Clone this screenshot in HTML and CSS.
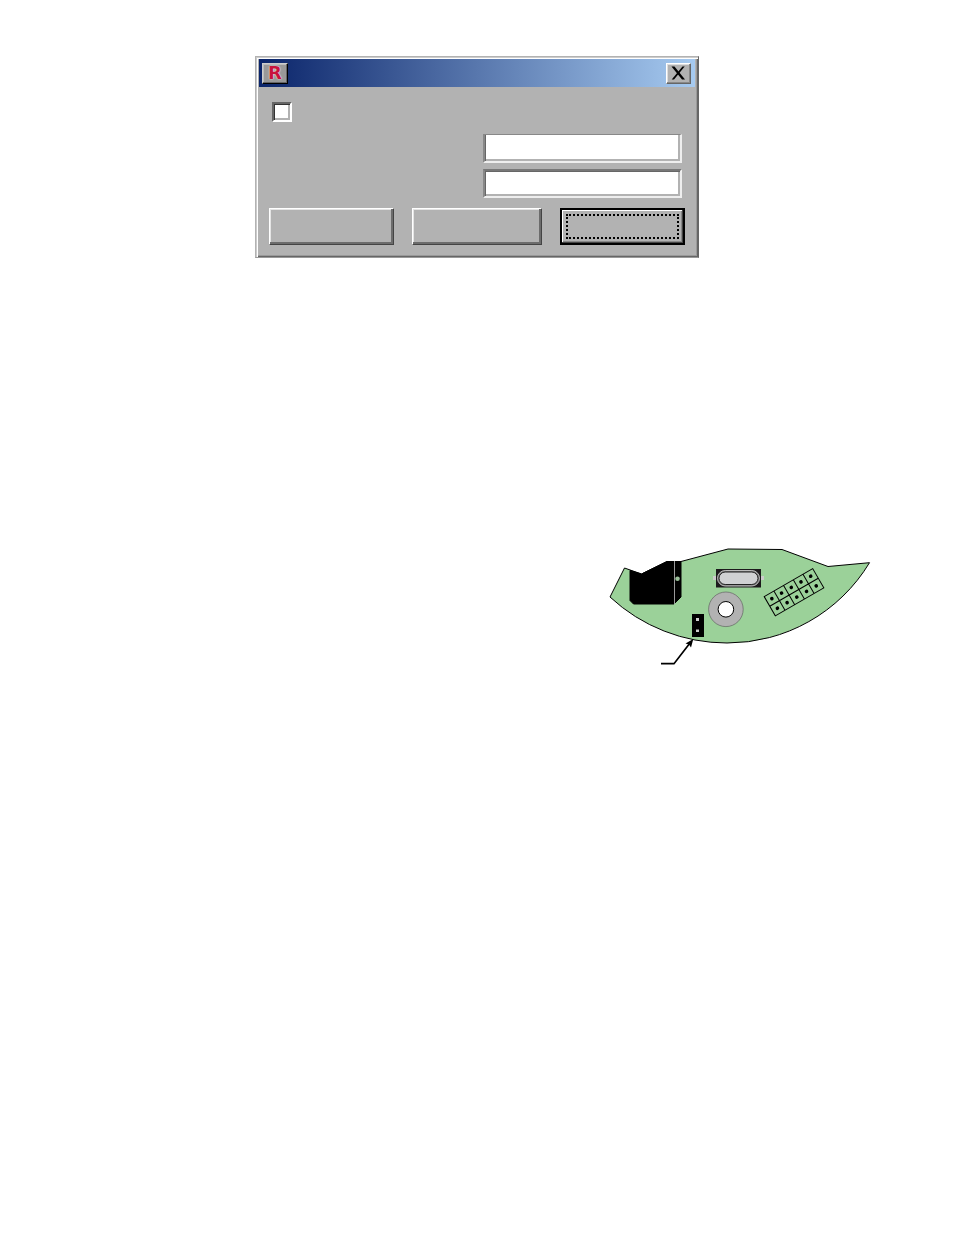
FILE: index.html
```html
<!DOCTYPE html>
<html lang="en">
<head>
    <meta charset="UTF-8">
    <meta name="viewport" content="width=device-width, initial-scale=1.0">
    <title>Settings</title>
    <link rel="stylesheet" href="styles.css">
</head>
<body>
    <form class="window">
        <div class="title-bar">
            <span class="title-icon">R</span>
            <button type="button" class="close-button" aria-label="Close">
                <svg width="15" height="14" viewBox="0 0 15 14">
                    <path d="M.5 .5H3.500L14 13.500H11Z"/>
                    <path d="M11.500 .5H13.700L3 13.500H.7Z"/>
                </svg>
            </button>
        </div>
        <div class="window-body">
            <input type="checkbox" class="check" aria-label="Enable">
            <div class="fields">
                <input type="text" class="field field-light" aria-label="First value">
                <input type="text" class="field" aria-label="Second value">
            </div>
            <div class="buttons">
                <button type="button" class="push-button" aria-label="OK"></button>
                <button type="button" class="push-button push-button-wide" aria-label="Cancel"></button>
                <button type="button" class="push-button push-button-default" aria-label="Apply"><span class="focus-frame"></span></button>
            </div>
        </div>
    </form>

    <div class="board">
        <svg width="280" height="130" viewBox="600 540 280 130" role="img" aria-label="Circuit board with jumper">
            <!-- board -->
            <path d="M610 597L624.500 568L641.500 574L667 561.500H681L728 549L782 549.500L828 566.500L869.500 562.700A166 166 0 0 1 727 643A172 172 0 0 1 610 597Z" fill="#9bd199" stroke="#000"/>
            <!-- connector -->
            <path d="M630 570.500L641.500 574L667 561.500H681V597L674 604H633.500L630 600.500Z" fill="#000" stroke="#000"/>
            <path d="M674.500 561V604" stroke="#999"/>
            <circle cx="677.500" cy="578.700" r="2.300" fill="#9bc09a"/>
            <!-- crystal -->
            <path d="M713 576H764V580H713Z" fill="#ccc"/>
            <path d="M716 569H761V587.500H716Z" fill="#1c1a1c"/>
            <rect x="717.500" y="570.500" width="42" height="15.500" rx="7.700" fill="#777" stroke="#bbb"/>
            <rect x="719" y="572" width="39" height="12.500" rx="6.200" fill="#d0d1d3" stroke="#222"/>
            <!-- mounting hole -->
            <circle cx="725.900" cy="609.300" r="17.300" fill="#b2b2b2" stroke="#555" stroke-width=".6"/>
            <circle cx="725.900" cy="609.300" r="7.800" fill="#fff" stroke="#000"/>
            <!-- jumper -->
            <path d="M692 614H704V637H692Z"/>
            <path d="M696 618H699V621H696ZM696 629.500H699V632H696Z" fill="#ccc"/>
            <!-- pin header -->
            <g transform="translate(764.200 596.600) rotate(-30)" fill="none" stroke="#000">
                <path d="M0 0H56V22.200H0ZM0 11.100H56M11.200 0V22.200M22.400 0V22.200M33.600 0V22.200M44.800 0V22.200"/>
                <path d="M5.600 5.600h.01m11.200 0h.01m11.200 0h.01m11.200 0h.01m11.200 0h.01M5.600 16.700h.01m11.200 0h.01m11.200 0h.01m11.200 0h.01m11.200 0h.01" stroke-width="3.600" stroke-linecap="round"/>
            </g>
            <!-- pointer -->
            <path d="M661 663.700H674L690 643" fill="none" stroke="#000" stroke-width="1.700"/>
            <path d="M693.300 639L691 647.500L689 644.500L685.500 643.500Z"/>
        </svg>
    </div>
</body>
</html>
```
FILE: styles.css
```css
* {
    box-sizing: border-box;
}
body {
    margin: 0;
    padding: 56px 16px;
    background: #fff;
    font-family: "Liberation Sans", Arial, sans-serif;
}
.window {
    max-width: 444px;
    margin: 0 auto;
    padding: 1px;
    background: #b2b2b2;
    border: 1px solid;
    border-color: #b2b2b2 #666 #999 #b2b2b2;
    box-shadow: inset 1px 1px #ccc, inset 2px 2px #fff, inset -1px -1px #666, inset -2px -2px #999;
}
.title-bar {
    display: flex;
    justify-content: space-between;
    align-items: center;
    height: 28px;
    margin: 1px 2px 0;
    padding: 0 4px 0 3px;
    background: linear-gradient(to right, #0a246a, #a6caf0);
}
.title-icon,
.close-button {
    display: flex;
    align-items: center;
    justify-content: center;
    width: 25px;
    height: 21px;
    padding: 0;
    background: #b2b2b2;
    border: 1px solid;
    border-color: #fff #666 #666 #fff;
    box-shadow: inset -1px -1px #888, inset 1px 1px #ddd;
}
.title-icon {
    width: 26px;
    background: #999;
    border-color: #ccc #000 #000 #ccc;
    box-shadow: inset -1px -1px #666, inset 1px 1px #bbb;
    color: #c8143c;
    font: bold 18px/1 "DejaVu Sans", sans-serif;
    text-shadow: 0 0 1px #fff, 0 0 2px #ddd;
}
.window-body {
    padding: 15px 12px 11px 11px;
}
.check {
    appearance: none;
    display: block;
    width: 20px;
    height: 20px;
    margin: 0 0 12px 4px;
    background: #fff;
    border: 2px solid;
    border-color: #666 #fff #fff #666;
    box-shadow: inset 1px 1px #333, inset -2px -2px #b2b2b2;
}
.fields {
    display: flex;
    flex-direction: column;
    align-items: flex-end;
    gap: 6px;
    margin: 0 3px 10px 0;
}
.field {
    width: 199px;
    height: 29px;
    padding: 2px 6px;
    background: #fff;
    border: 2px solid;
    border-color: #777 #eee #eee #888;
    box-shadow: inset 1px 1px #666, inset -2px -2px #b2b2b2;
    font-size: 16px;
}
.field-light {
    border-top: 1px solid #888;
    box-shadow: inset 1px 0 #666, inset -2px -2px #b2b2b2;
}
.buttons {
    display: flex;
    justify-content: space-between;
    gap: 16px;
    padding-left: 1px;
}
.push-button {
    flex: 0 1 125px;
    height: 37px;
    padding: 0;
    background: #b2b2b2;
    border: 1px solid;
    border-color: #fff #444 #444 #fff;
    box-shadow: inset -2px -2px #6c6c6c, inset 1px 1px #e4e4e4;
}
.push-button-wide {
    flex-basis: 130px;
}
.push-button-default {
    display: flex;
    padding: 4px;
    border: 2px solid #000;
    box-shadow: inset -1px -1px #444, inset 1px 1px #fff, inset -2px -2px #888;
}
.focus-frame {
    flex: 1;
    align-self: stretch;
    border: 2px dotted #000;
}
.board {
    display: flex;
    justify-content: flex-end;
    margin-top: 282px;
    padding-right: 58px;
}
```
